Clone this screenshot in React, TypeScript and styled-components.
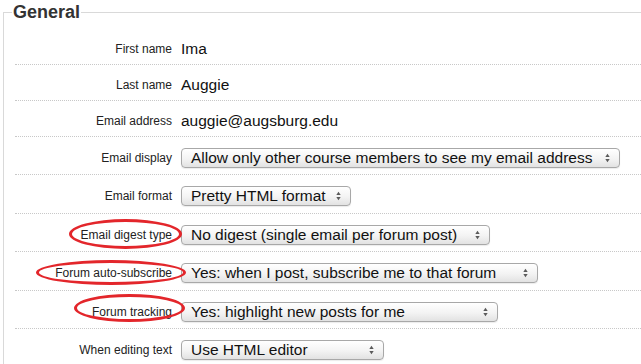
import React from 'react';
import styled, { createGlobalStyle } from 'styled-components';

const Global = createGlobalStyle`
  html, body { margin: 0; padding: 0; background: #fff; overflow: hidden; }
  body { font-family: "Liberation Sans", Arial, Helvetica, sans-serif; }
`;

const Fieldset = styled.fieldset`
  margin: 0 0 0 3px;
  padding: 5px 0 40px 11px;
  border: 1px solid #d9d9d9;
  border-right: none;
  width: 720px;
  min-width: 0;
`;

const Legend = styled.legend`
  margin-left: -3px;
  padding: 0 1px;
  font-size: 18px;
  font-weight: bold;
  line-height: 24px;
  color: #333;
`;

const Row = styled.div<{ $select?: boolean; $tall?: boolean }>`
  position: relative;
  display: flex;
  align-items: center;
  padding: ${(p) => (p.$select ? `11px 0 ${p.$tall ? 7 : 6}px` : '10px 0 6px')};
  border-bottom: 1px dotted #c8c8c8;
`;

const Label = styled.div`
  flex: none;
  width: 157px;
  text-align: right;
  font-size: 12px;
  line-height: 16px;
  color: #222;
`;

const Value = styled.div`
  margin-left: 9px;
  font-size: 15.5px;
  line-height: 19px;
  color: #111;
  white-space: nowrap;
`;

const SelectBox = styled.div<{ $w: number }>`
  box-sizing: border-box;
  width: ${(p) => p.$w}px;
  height: 20px;
  margin-left: 9px;
  padding: 0 9px;
  display: flex;
  align-items: center;
  justify-content: space-between;
  border: 1px solid #a8a8a8;
  border-radius: 4px;
  background: linear-gradient(#ffffff, #f3f3f3 55%, #e2e2e2);
  box-shadow: 0 1px 1px rgba(0, 0, 0, 0.08);
  font-size: 15.5px;
  color: #111;
  white-space: nowrap;
`;

const Arrows = styled.svg`
  flex: none;
  width: 5px;
  height: 10px;
`;

const Ring = styled.span<{ $x: number; $y: number; $w: number; $h: number }>`
  position: absolute;
  left: ${(p) => p.$x}px;
  top: ${(p) => p.$y}px;
  width: ${(p) => p.$w}px;
  height: ${(p) => p.$h}px;
  box-sizing: border-box;
  border: 3px solid #e3262b;
  border-radius: 50%;
  pointer-events: none;
`;

type Item = {
  label: string;
  value: string;
  width?: number;
  tall?: boolean;
  ring?: { x: number; y: number; w: number; h: number };
};

const items: Item[] = [
  { label: 'First name', value: 'Ima' },
  { label: 'Last name', value: 'Auggie' },
  { label: 'Email address', value: 'auggie@augsburg.edu' },
  { label: 'Email display', value: 'Allow only other course members to see my email address', width: 439 },
  { label: 'Email format', value: 'Pretty HTML format', width: 170, tall: true },
  {
    label: 'Email digest type',
    value: 'No digest (single email per forum post)',
    width: 309,
    ring: { x: 54, y: 5, w: 113, h: 30 },
  },
  {
    label: 'Forum auto-subscribe',
    value: 'Yes: when I post, subscribe me to that forum',
    width: 357,
    tall: true,
    ring: { x: 21, y: 8, w: 150, h: 25 },
  },
  {
    label: 'Forum tracking',
    value: 'Yes: highlight new posts for me',
    width: 317,
    ring: { x: 59, y: 3, w: 111, h: 28 },
  },
  { label: 'When editing text', value: 'Use HTML editor', width: 203 },
];

const UpDown = () => (
  <Arrows viewBox="0 0 5 10">
    <path d="M0.3 4 L2.5 0.8 L4.7 4 Z" fill="#5a5a5a" />
    <path d="M0.3 6 L2.5 9.2 L4.7 6 Z" fill="#5a5a5a" />
  </Arrows>
);

export default function App() {
  return (
    <>
      <Global />
      <Fieldset>
        <Legend>General</Legend>
        {items.map((it) => (
          <Row key={it.label} $select={!!it.width} $tall={it.tall}>
            <Label>{it.label}</Label>
            {it.width ? (
              <SelectBox $w={it.width}>
                <span>{it.value}</span>
                <UpDown />
              </SelectBox>
            ) : (
              <Value>{it.value}</Value>
            )}
            {it.ring && <Ring $x={it.ring.x} $y={it.ring.y} $w={it.ring.w} $h={it.ring.h} />}
          </Row>
        ))}
      </Fieldset>
    </>
  );
}
